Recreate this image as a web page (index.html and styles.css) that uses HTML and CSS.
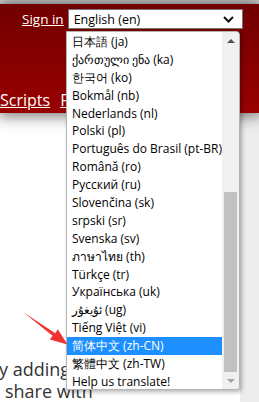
FILE: index.html
```html
<!doctype html>
<html>
<head>
<meta charset="utf-8">
<title>Greasy Fork</title>
<link rel="stylesheet" href="styles.css">
</head>
<body>
<div class="topbar"></div>
<div class="header">
	<div class="account">
		<a href="#" class="signin">Sign in</a>
		<div class="select">
			<span>English (en)</span>
			<svg class="chev" width="11" height="7" viewBox="0 0 11 7"><path d="M1 1l4.5 4.5L10 1" fill="none" stroke="#111" stroke-width="2"/></svg>
		</div>
	</div>
	<div class="nav">
		<a href="#">Scripts</a>
		<a href="#">Forum</a>
		<a href="#">Help</a>
	</div>
</div>
<div class="main">
	<div class="text">
		<div class="line">y adding</div>
		<div class="line second">share with</div>
	</div>
	<div class="side"></div>
</div>

<div class="popup">
	<ul class="options">
		<li>日本語 (ja)</li>
		<li>ქართული ენა (ka)</li>
		<li>한국어 (ko)</li>
		<li>Bokmål (nb)</li>
		<li>Nederlands (nl)</li>
		<li>Polski (pl)</li>
		<li>Português do Brasil (pt-BR)</li>
		<li>Română (ro)</li>
		<li>Русский (ru)</li>
		<li>Slovenčina (sk)</li>
		<li>srpski (sr)</li>
		<li>Svenska (sv)</li>
		<li>ภาษาไทย (th)</li>
		<li>Türkçe (tr)</li>
		<li>Українська (uk)</li>
		<li>ئۇيغۇر (ug)</li>
		<li>Tiếng Việt (vi)</li>
		<li class="active">简体中文 (zh-CN)</li>
		<li>繁體中文 (zh-TW)</li>
		<li>Help us translate!</li>
	</ul>
	<div class="scrollbar">
		<div class="arrow up"></div>
		<div class="track"><div class="thumb"></div></div>
		<div class="arrow down"></div>
	</div>
</div>

<svg class="pointer" width="80" height="60" viewBox="0 0 80 60">
	<polygon points="1,0 33.2,21.2 35.8,17.2 45.5,32.5 27.8,27.6 30.6,23.8" fill="#ee3331"/>
</svg>
</body>
</html>
```

FILE: styles.css
```css
*{ margin:0; padding:0; list-style:none; box-sizing:border-box;}
body{ width:259px; height:402px; overflow:hidden; font-family:"Open Sans", sans-serif; background:#fff;}
a{ color:#fff;}

.topbar{ height:4px; background:#dedede;}
.header{ height:109px; background:linear-gradient(#720000,#990000); box-shadow:0 0 15px 2px rgba(0,0,0,0.6); position:relative; z-index:1; padding-top:5px;}
.account{ display:flex; align-items:center; padding-left:22px;}
.signin{ font-size:13.5px; line-height:20px; margin-right:4px;}
.select{ width:175px; height:20px; background:#fff; border:1px solid #767676; display:flex; align-items:center; justify-content:space-between; padding:0 8px 0 5px; font-size:12.5px; color:#000;}
.nav{ display:flex; gap:10px; margin-top:61px;}
.nav a{ font-size:16px; line-height:20px;}

.main{ display:flex; height:289px;}
.text{ flex:1; padding-top:245px; color:#333; font-size:18px; margin-left:-1px;}
.line{ line-height:22px; white-space:nowrap;}
.second{ padding-left:6px;}
.side{ width:19px; background:#ededed;}

.popup{ position:absolute; left:66px; top:31px; width:174px; height:359px; background:#fff; border:1px solid #b4b4b4; border-radius:0 4px 4px 0; box-shadow:2px 2px 4px rgba(0,0,0,0.3); display:flex; z-index:2; overflow:hidden;}
.options{ flex:1; padding-top:1px;}
.options li{ height:17.9px; line-height:17.9px; padding-left:5px; font-size:12px; color:#000; white-space:nowrap;}
.options li.active{ background:#1e8fff; color:#fff;}
.scrollbar{ width:17px; background:#f0f0f0; display:flex; flex-direction:column;}
.arrow{ height:17px; display:flex; align-items:center; justify-content:center;}
.arrow:before{ content:''; border-left:4px solid transparent; border-right:4px solid transparent;}
.up:before{ border-bottom:4px solid #505050;}
.down:before{ border-top:4px solid #a3a3a3;}
.track{ flex:1; display:flex; flex-direction:column; justify-content:flex-end; padding:0 2px;}
.thumb{ height:180px; background:#c1c1c1;}

.pointer{ position:absolute; left:22px; top:312px; z-index:3;}
```
